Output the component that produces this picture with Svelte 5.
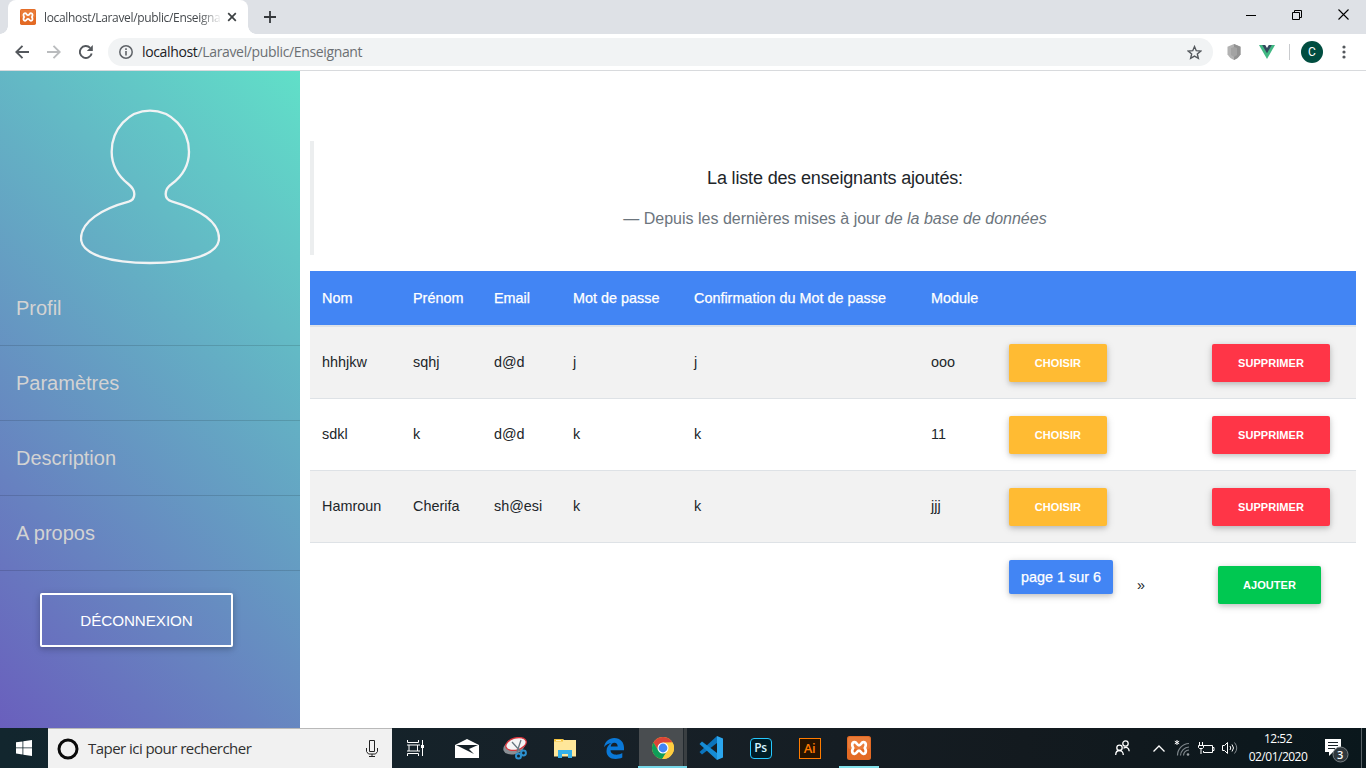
<script>
  const menu = ['Profil', 'Paramètres', 'Description', 'A propos'];
  const heads = ['Nom', 'Prénom', 'Email', 'Mot de passe', 'Confirmation du Mot de passe', 'Module'];
  const rows = [
    ['hhhjkw', 'sqhj', 'd@d', 'j', 'j', 'ooo'],
    ['sdkl', 'k', 'd@d', 'k', 'k', '11'],
    ['Hamroun', 'Cherifa', 'sh@esi', 'k', 'k', 'jjj']
  ];
</script>

{#snippet xampp(size)}
  <svg width={size} height={size} viewBox="0 0 24 24">
    <rect width="24" height="24" rx="2.500" fill="#e36a24" />
    <rect x="1" y="1" width="22" height="12" rx="2" fill="#f08a4b" opacity=".55" />
    <path d="M7.500 6.200C9.800 6 9.800 9.300 12 9.300S14.200 6 16.500 6.200C19.300 6.500 19.300 9.500 17.800 12C19.300 14.500 19.300 17.500 16.500 17.800C14.200 18 14.200 14.700 12 14.700S9.800 18 7.500 17.800C4.700 17.500 4.700 14.500 6.200 12C4.700 9.500 4.700 6.500 7.500 6.200Z" fill="none" stroke="#fff" stroke-width="2.700" stroke-linejoin="round" />
  </svg>
{/snippet}

<div class="screen">
  <header class="tabs">
    <div class="tab">
      {@render xampp(16)}
      <span class="tabtitle">localhost/Laravel/public/Enseigna</span>
      <svg width="10" height="10" viewBox="0 0 10 10"><path d="M1.200 1.200l7.600 7.600M8.800 1.200L1.200 8.800" stroke="#3c4043" stroke-width="1.700" /></svg>
    </div>
    <svg class="plus" width="12" height="12" viewBox="0 0 12 12"><path d="M6 0v12M0 6h12" stroke="#35383b" stroke-width="1.800" /></svg>
    <div class="win">
      <svg width="10" height="12" viewBox="0 0 10 12"><path d="M0 6.500h10" stroke="#000" /></svg>
      <svg width="10" height="10" viewBox="0 0 10 10"><path d="M.5 2.500h7v7h-7zM2.500 2.500v-2h7v7h-2" fill="none" stroke="#000" /></svg>
      <svg width="11" height="11" viewBox="0 0 11 11"><path d="M.5 .5l10 10M10.500 .5l-10 10" stroke="#000" stroke-width="1.100" /></svg>
    </div>
  </header>

  <nav class="toolbar">
    <svg class="back" width="14" height="14" viewBox="0 0 14 14"><path d="M14 7H1.500M7.500 .8L1.300 7l6.200 6.200" fill="none" stroke="#54585d" stroke-width="1.900" /></svg>
    <svg class="fwd" width="14" height="14" viewBox="0 0 14 14"><path d="M0 7h12.500M6.500 .8L12.700 7l-6.200 6.200" fill="none" stroke="#babcbe" stroke-width="1.900" /></svg>
    <svg class="reload" width="14" height="14" viewBox="0 0 14 14"><path d="M12.700 8.500A6 6 0 1 1 11.200 2.800" fill="none" stroke="#54585d" stroke-width="1.900" /><path d="M13.800 0v6H7.800z" fill="#54585d" /></svg>
    <div class="omni">
      <svg width="14" height="14" viewBox="0 0 14 14"><circle cx="7" cy="7" r="6.200" fill="none" stroke="#5f6368" stroke-width="1.500" /><path d="M7 6v4.500M7 3.300v1.600" stroke="#5f6368" stroke-width="1.600" /></svg>
      <span class="url"><b>localhost</b>/Laravel/public/Enseignant</span>
      <svg class="star" width="15" height="15" viewBox="0 0 24 24"><path d="M12 2.500l2.800 6.600 7.200.6-5.500 4.700 1.700 7L12 17.700l-6.200 3.700 1.700-7L2 9.700l7.200-.6z" fill="none" stroke="#54585d" stroke-width="2.200" /></svg>
    </div>
    <svg class="shield" width="14" height="16" viewBox="0 0 14 16"><path d="M7 0l6.500 2.800v7.500C12 13.500 9.500 15 7 16 4.500 15 2 13.500.5 10.300V2.800z" fill="#b2b2b2" /><path d="M7 0l6.500 2.800v7.500C12 13.500 9.500 15 7 16z" fill="#929292" /><path d="M7 3l3 1v7l-3 2-3-2V4z" fill="#a3a3a3" /></svg>
    <svg class="vue" width="16" height="14" viewBox="0 0 16 14"><path d="M0 0h16L8 14z" fill="#41b883" /><path d="M3.200 0h9.600L8 8.300z" fill="#34495e" /><path d="M6.200 0h3.600L8 3z" fill="#fff" /></svg>
    <i class="sep"></i>
    <span class="avatar">C</span>
    <svg class="dots" width="4" height="14" viewBox="0 0 4 14" fill="#54585d"><circle cx="2" cy="2" r="1.600" /><circle cx="2" cy="7" r="1.600" /><circle cx="2" cy="12" r="1.600" /></svg>
  </nav>

  <div class="page">
    <aside>
      <svg class="person" width="140" height="156" viewBox="240 117 420 468">
        <path d="M450 122C386 122 335 177 335 245C335 284 355 318 385 342C397 352 403 361 403 372C403 384 396 392 386 395C307 416 243 455 243 505C243 555 334 579 450 579S657 555 657 505C657 455 597 418 515 394C503 391 497 382 497 372C497 361 503 350 515 342C547 318 567 284 567 245C567 177 514 122 450 122Z" fill="none" stroke="#f1f3f4" stroke-width="7" />
      </svg>
      <ul>
        {#each menu as item}<li>{item}</li>{/each}
      </ul>
      <button class="logout">DÉCONNEXION</button>
    </aside>
    <main>
      <blockquote>
        <p class="lead"><span>La liste des enseignants ajoutés:</span></p>
        <p class="foot"><span>— Depuis les dernières mises à jour <em>de la base de données</em></span></p>
      </blockquote>
      <table>
        <colgroup>
          <col style="width:91px" /><col style="width:81px" /><col style="width:79px" /><col style="width:121px" /><col style="width:237px" /><col style="width:78px" /><col style="width:128px" /><col style="width:75px" /><col style="width:156px" />
        </colgroup>
        <thead>
          <tr>
            {#each heads as h}<th><span>{h}</span></th>{/each}
            <th></th><th></th><th></th>
          </tr>
        </thead>
        <tbody>
          {#each rows as r}
            <tr class="data">
              {#each r as c}<td class="txt">{c}</td>{/each}
              <td><button class="btn amber">CHOISIR</button></td>
              <td></td>
              <td><button class="btn red">SUPPRIMER</button></td>
            </tr>
          {/each}
          <tr class="last">
            <td colspan="6"></td>
            <td><span class="pg">page 1 sur 6</span></td>
            <td class="next">»</td>
            <td><button class="btn green">AJOUTER</button></td>
          </tr>
        </tbody>
      </table>
    </main>
  </div>

  <footer>
    <div class="start">
      <svg width="16" height="16" viewBox="0 0 16 16" fill="#fff"><path d="M0 2.300L6.500 1.400V7.500H0zM7.300 1.300L16 0v7.500H7.300zM0 8.300h6.500v6.200L0 13.600zM7.300 8.300H16V16l-8.700-1.300z" /></svg>
    </div>
    <div class="search">
      <svg width="22" height="22" viewBox="0 0 22 22"><circle cx="11" cy="11" r="9" fill="none" stroke="#0a0a0a" stroke-width="3" /></svg>
      <span>Taper ici pour rechercher</span>
      <svg class="mic" width="12" height="17" viewBox="0 0 12 17"><path d="M3.500 .5h5v11h-5zM.5 8v3.500l2 2.500h7l2-2.500V8M6 14v2.500M3 16.500h6" fill="none" stroke="#222" /></svg>
    </div>
    <div class="apps">
      <div class="app view">
        <svg width="18" height="16" viewBox="0 0 18 16"><path d="M.5 0v2.500h11V0M.5 16v-2.500h11V16M2 5h8.500v6H2zM0 5h2M0 11h2M10.500 5H13M10.500 11H13M15.500 0v16" fill="none" stroke="#fff" /><path d="M14 5h3v3h-3z" fill="#fff" /></svg>
      </div>
      <div class="app">
        <svg width="24" height="19" viewBox="0 0 24 19"><path d="M0 6L12 0l12 6v13H0z" fill="#fff" /><path d="M1 6h22l-9 4 5 5L3 7z" fill="#152027" /></svg>
      </div>
      <div class="app">
        <svg width="25" height="23" viewBox="0 0 25 23"><ellipse cx="11" cy="10" rx="11" ry="7" transform="rotate(-18 11 10)" fill="#8a8f94" /><ellipse cx="13" cy="7" rx="10.500" ry="6" transform="rotate(-16 13 7)" fill="#f5f5f5" stroke="#d9363e" stroke-width="1.300" /><path d="M9 5l9 10M18 3l-4 12" stroke="#687780" stroke-width="1.300" /><circle cx="15.500" cy="19" r="2.500" fill="none" stroke="#2d91d0" stroke-width="2" /><circle cx="20.500" cy="16" r="2.400" fill="none" stroke="#2d91d0" stroke-width="2" /></svg>
      </div>
      <div class="app">
        <svg width="22" height="19" viewBox="0 0 22 19"><path d="M0 1.500Q0 0 1 0h8l1 1h12v16.500H0z" fill="#ffe79a" /><path d="M0 2.500V1q0-1 1-1h8v2.500z" fill="#f4c23c" /><path d="M4 19v-8h14v8h-4v-4H8v4z" fill="#35b0e8" /><path d="M2 1.500h5" stroke="#fff3c4" /></svg>
      </div>
      <div class="app">
        <svg width="20" height="21" viewBox="0 0 20 21"><path d="M0 9.200C1 3.500 5 0 10.300 0 16.500 0 20 4.500 20 9.500v2.800H6.500c.2 3 2.700 4.400 5.800 4.400 2.300 0 4.300-.6 6-1.600v4.500c-2 1-4.300 1.400-6.800 1.400C5.800 21 2.500 17.500 2.500 13c0-3.800 2-6.500 5-8C4.500 5.300 2 6.700 0 9.200zM6.700 8.500h7c0-2.300-1.300-3.700-3.300-3.700S6.900 6.200 6.700 8.500z" fill="#0a78d7" /></svg>
      </div>
      <div class="app on">
        <svg width="22" height="22" viewBox="0 0 22 22"><circle cx="11" cy="11" r="11" fill="#fcc934" /><path d="M1.470 5.500A11 11 0 0 1 20.530 5.500L11 6l-4.760 7.750z" fill="#db4437" /><path d="M1.470 5.500A11 11 0 0 0 10.200 22l5.100-8.500H6.240z" fill="#0f9d58" /><path d="M20.530 5.500H11l4.760 8.250L10.200 22A11 11 0 0 0 20.530 5.500z" fill="#ffcd40" /><circle cx="11" cy="11" r="5.500" fill="#fff" /><circle cx="11" cy="11" r="4.400" fill="#4285f4" /></svg>
      </div>
      <div class="app">
        <svg width="25" height="24" viewBox="0 0 25 24"><path d="M18 0l6 2.500v19L18 24z" fill="#2ba6ee" /><path d="M18 0v7L3 18.500.5 16z" fill="#0b74bd" /><path d="M18 24v-7L3 5.500.5 8z" fill="#168cd5" /></svg>
      </div>
      <div class="app"><span class="adobe ps">Ps</span></div>
      <div class="app"><span class="adobe ai">Ai</span></div>
      <div class="app open">{@render xampp(24)}</div>
    </div>
    <div class="tray">
      <svg class="people" width="15" height="16" viewBox="0 0 15 16"><g fill="none" stroke="#fff" stroke-width="1.300"><circle cx="10.500" cy="3.500" r="2.700" /><circle cx="4.500" cy="7.800" r="2.700" /><path d="M.7 15c0-6 7.600-6 7.600 0M8.500 8.200c3-2 5.500-.2 5.700 3" /></g></svg>
      <svg class="chev" width="12" height="7" viewBox="0 0 12 7"><path d="M.5 6.500L6 1l5.500 5.500" fill="none" stroke="#fff" stroke-width="1.300" /></svg>
      <svg class="wifi" width="16" height="16" viewBox="0 0 16 16"><g fill="none" stroke="#7e868b" stroke-width="1.200"><path d="M3.500 15.500A12 12 0 0 1 15 3.500M6.500 15.500A9 9 0 0 1 15 7M9.500 15.500A6 6 0 0 1 15 10" /></g><circle cx="14" cy="14.500" r="1.300" fill="#9ba1a5" /><path d="M3 0v5M.8 1.200l4.400 2.600M5.200 1.200L.8 3.800" stroke="#fff" /></svg>
      <svg class="bat" width="17" height="13" viewBox="0 0 17 13"><path d="M5.500 3.500h9v7h-9V9M14.500 5.500H16v3h-1.500M1.500 0v3M4.500 0v3M.5 3.500h5v2l-1 1h-3l-1-1zM3 7v5" fill="none" stroke="#fff" /></svg>
      <svg class="vol" width="16" height="14" viewBox="0 0 16 14"><g fill="none" stroke="#fff"><path d="M.5 4.500h2l3-3v11l-3-3h-2zM8 5q1.500 2 0 4M10 3.500q3 3.500 0 7" /><path d="M12.500 1.500q4.500 5.500 0 11" stroke="#848b90" /></g></svg>
      <div class="clock"><span>12:52</span><span>02/01/2020</span></div>
      <div class="notif">
        <svg width="24" height="24" viewBox="0 0 24 24"><path d="M0 0h16v13H8l-4 4v-4H0z" fill="#fff" /><path d="M3 3.500h10M3 6.500h10M3 9.500h7" stroke="#1a2329" /><circle cx="15.500" cy="15.500" r="7.500" fill="#30383d" stroke="#777e82" /></svg>
        <b>3</b>
      </div>
      <i class="peek"></i>
    </div>
  </footer>
</div>

<style>
  :global(body) { margin: 0; overflow: hidden; }
  .screen { width: 1366px; height: 768px; display: flex; flex-direction: column; background: #fff; font-family: "Liberation Sans", Arial, sans-serif; overflow: hidden; }
  .screen * { box-sizing: border-box; }
  svg { display: block; flex: none; }
  button { font-family: inherit; border: 0; padding: 0; display: block; }

  .tabs { height: 34px; flex: none; background: #dee1e6; display: flex; align-items: center; }
  .tab { position: relative; width: 240px; height: 34px; margin-left: 8px; background: #fff; border-radius: 8px 8px 0 0; display: flex; align-items: center; padding: 0 0 0 12px; }
  .tab::before, .tab::after { content: ""; position: absolute; bottom: 0; width: 8px; height: 8px; }
  .tab::before { left: -8px; background: radial-gradient(circle at 0 0, #dee1e6 7.500px, #fff 8px); }
  .tab::after { right: -8px; background: radial-gradient(circle at 100% 0, #dee1e6 7.500px, #fff 8px); }
  .tabtitle { width: 176px; margin: 0 7px 0 8px; white-space: nowrap; font: 12px "Open Sans", sans-serif; letter-spacing: -0.340px; color: #45494d; -webkit-mask-image: linear-gradient(90deg, #000 155px, transparent 178px); mask-image: linear-gradient(90deg, #000 155px, transparent 178px); }
  .plus { margin-left: 16px; }
  .win { margin-left: auto; display: flex; align-items: center; gap: 36px; padding: 0 17px 5px 0; }

  .toolbar { height: 37px; flex: none; border-bottom: 1px solid #d8dadd; display: flex; align-items: center; padding-left: 15px; }
  .fwd { margin-left: 18px; }
  .reload { margin-left: 18px; }
  .omni { width: 1105px; height: 28px; margin-left: 15px; border-radius: 14px; background: #f1f3f4; display: flex; align-items: center; padding: 0 11px 0 11px; }
  .url { margin: 0 0 1px 9px; font: 14px "Open Sans", sans-serif; letter-spacing: -0.350px; color: #6b6f73; }
  .url b { font-weight: 400; color: #202124; }
  .star { margin-left: auto; }
  .shield { margin-left: 14px; }
  .vue { margin-left: 18px; }
  .sep { width: 1px; height: 16px; margin: 0 11px 0 14px; background: #c9cbce; }
  .avatar { width: 22px; height: 22px; border-radius: 50%; background: #004d40; color: #fff; font: 12px/22px Roboto, sans-serif; text-align: center; }
  .dots { margin-left: 19px; }

  .page { flex: 1; display: flex; min-height: 0; }
  aside { width: 300px; padding-top: 38px; background: linear-gradient(45deg, rgba(42, 27, 161, .7), rgba(29, 210, 177, .7)); }
  .person { margin: 0 auto; }
  ul { list-style: none; margin: 6px 0 0; padding: 0; }
  li { height: 75px; padding-left: 16px; line-height: 75px; font-size: 20px; color: #d3d3d3; border-bottom: 1px solid rgba(0, 0, 0, .13); }
  .logout { width: 193px; height: 54px; margin: 22px 0 0 40px; border: 2px solid #fff; border-radius: 2px; background: transparent; color: #fff; font-size: 15.200px; letter-spacing: -0.060px; box-shadow: 0 2px 5px rgba(0, 0, 0, .16), 0 2px 10px rgba(0, 0, 0, .12); }

  main { width: 1046px; margin-left: 10px; padding-top: 70px; }
  blockquote { height: 114px; margin: 0 0 16px; padding-top: 23px; border-left: 4px solid #eceeef; text-align: center; }
  blockquote p { margin: 0; }
  .lead { font-size: 18px; line-height: 28px; letter-spacing: -0.160px; color: #212529; }
  .foot { margin-top: 15px; font-size: 16px; line-height: 24px; color: #6c757d; }
  table { width: 1046px; table-layout: fixed; border-collapse: separate; border-spacing: 0; color: #212529; font-size: 14.400px; }
  th, td { padding: 0 0 0 12px; text-align: left; }
  th { height: 56px; background: #4285f4; border-bottom: 2px solid #dee2e6; color: #fff; font-weight: 400; white-space: nowrap; -webkit-text-stroke: .25px #fff; }
  .data td { height: 72px; border-bottom: 1px solid #dee2e6; }
  .data .txt { padding-bottom: 2px; }
  .data:nth-child(odd) td { background: #f2f2f2; }
  .last td { height: 80px; vertical-align: top; padding-top: 17px; }
  .btn { height: 38px; border-radius: 2px; color: #fff; font-size: 11px; font-weight: 700; letter-spacing: .060px; box-shadow: 0 2px 5px rgba(0, 0, 0, .16), 0 2px 10px rgba(0, 0, 0, .12); }
  .amber { width: 98px; background: #fb3; }
  .red { width: 118px; background: #ff3547; }
  .green { width: 103px; background: #00c851; margin: 6px 0 0 6px; }
  .pg { display: block; width: 104px; height: 34px; border-radius: 2px; background: #4285f4; color: #fff; line-height: 34px; text-align: center; -webkit-text-stroke: .25px #fff; box-shadow: 0 2px 5px rgba(0, 0, 0, .16), 0 2px 10px rgba(0, 0, 0, .12); }
  .last .next { padding-top: 34px; line-height: 17px; }

  footer { height: 40px; flex: none; display: flex; color: #fff; background: linear-gradient(90deg, #12262e, #172027 48%, #131a1f 75%, #0a171c); }
  .start { width: 48px; display: flex; align-items: center; justify-content: center; }
  .search { width: 344px; background: #f1f1f1; border-top: 1px solid #b9b9b9; display: flex; align-items: center; padding: 0 14px 0 9px; color: #303030; }
  .search span { margin: 0 0 2px 9px; font: 15px "Open Sans", sans-serif; letter-spacing: -0.540px; }
  .mic { margin-left: auto; }
  .apps { display: flex; }
  .app { width: 49px; display: flex; align-items: center; justify-content: center; }
  .view { width: 50px; padding-right: 2px; }
  .on { background: linear-gradient(90deg, transparent 1px, #494d50 1px, #494d50 45px, #22292e 45px, #22292e 46px, #3a3f42 46px); box-shadow: inset 0 -2px #76d7e8; }
  .open { background: linear-gradient(#83e2ec, #83e2ec) 5px 38px / 40px 2px no-repeat; }
  .adobe { width: 22px; height: 21px; border: 1.500px solid; font: 600 12px/18px "Open Sans", sans-serif; text-align: center; letter-spacing: -0.300px; }
  .ps { border-color: #26c9ff; border-radius: 4px; background: #001d26; color: #d5f5ff; }
  .ai { border-color: #ff7c00; background: #261300; color: #ff7c00; font-size: 13px; }
  .tray { margin-left: auto; display: flex; align-items: center; height: 40px; }
  .people { margin-right: 1px; }
  .chev { margin-left: 22px; }
  .wifi { margin-left: 9px; }
  .bat { margin-left: 8px; }
  .vol { margin-left: 7px; }
  .clock { width: 62px; margin-left: 9px; display: flex; flex-direction: column; align-items: center; font: 12px/18px "Open Sans", sans-serif; letter-spacing: -0.500px; white-space: nowrap; }
  .notif { position: relative; width: 24px; height: 24px; margin: 5px 0 0 16px; }
  .notif b { position: absolute; left: 12px; top: 9px; font: 600 11px/13px "Open Sans", sans-serif; }
  .peek { width: 5px; height: 40px; margin-left: 12px; border-left: 1px solid #586166; }
</style>
